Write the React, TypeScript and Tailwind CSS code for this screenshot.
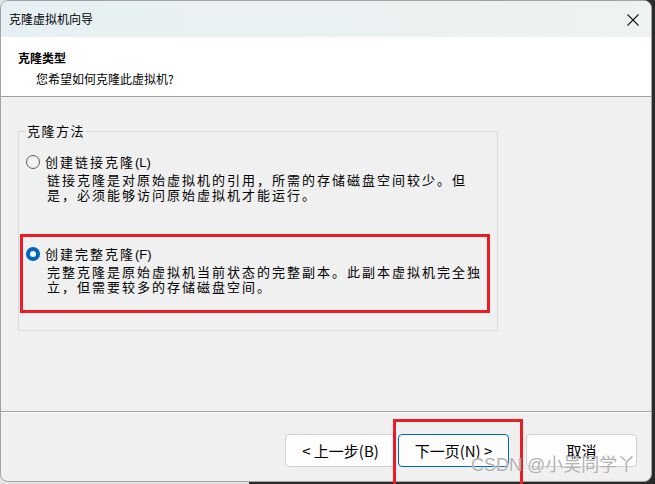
import React from "react";

const cjk = "font-['Noto_Sans_CJK_SC',sans-serif]";

function Radio({ checked }: { checked?: boolean }) {
  if (checked) {
    return (
      <span className="w-[14px] h-[14px] rounded-full bg-[#0067c0] flex items-center justify-center shrink-0">
        <span className="w-[6px] h-[6px] rounded-full bg-white" />
      </span>
    );
  }
  return <span className="w-[14px] h-[14px] rounded-full border border-[#5c5c5c] bg-[#f3f3f3] shrink-0" />;
}

function Option({ checked, label, hotkey, lines }: { checked?: boolean; label: string; hotkey: string; lines: string[] }) {
  return (
    <div className="flex flex-col">
      <div className="flex items-center h-[16px] leading-[16px]">
        <Radio checked={checked} />
        <span className="ml-[5px] text-[13px] tracking-[2px] whitespace-nowrap">
          {label}
          <span className="font-['Liberation_Sans',sans-serif] tracking-normal text-[13px]">{hotkey}</span>
        </span>
      </div>
      <div className="mt-[2px] ml-[21px] text-[13px] leading-[15px] tracking-[2px] whitespace-nowrap">
        {lines.map((l) => (
          <div key={l}>{l}</div>
        ))}
      </div>
    </div>
  );
}

export default function App() {
  return (
    <div className={`relative w-[655px] h-[484px] overflow-hidden bg-[linear-gradient(to_right,#e4e4e4_38%,#2b2b2b_38%)] text-black ${cjk}`}>
      <div className="w-[652px] h-[482px] flex flex-col border border-[#a3a3a3] rounded-[8px] overflow-hidden bg-[#f0f0f0]">
        {/* title bar */}
        <div className="h-[36px] shrink-0 flex items-center justify-between pl-[8px] pr-[12px] bg-[linear-gradient(to_right,#e6f0f4,#eef2f0)]">
          <span className="text-[12px] leading-[16px]">克隆虚拟机向导</span>
          <svg width="12" height="12" viewBox="0 0 12 12" className="mt-[1px]">
            <path d="M0.5 0.5 L11.5 11.5 M11.5 0.5 L0.5 11.5" stroke="#1a1a1a" strokeWidth="1.1" />
          </svg>
        </div>
        {/* header */}
        <div className="h-[59px] shrink-0 bg-white pl-[17px] pt-[13px]">
          <div className="text-[12px] leading-[16px] font-bold">克隆类型</div>
          <div className="mt-[5px] ml-[18px] text-[12px] leading-[16px]">您希望如何克隆此虚拟机?</div>
        </div>
        <div className="h-[1px] shrink-0 bg-[#a0a0a0]" />
        {/* body */}
        <div className="h-[314px] shrink-0 pt-[34px] pl-[17px]">
          <div className="relative w-[480px] h-[200px] border border-[#dadada] pt-[22px] pl-[7px]">
            <span className="absolute -top-[9px] left-[7px] px-[1px] bg-[#f0f0f0] text-[13px] leading-[16px] tracking-[1.5px]">
              克隆方法
            </span>
            <Option
              label="创建链接克隆"
              hotkey="(L)"
              lines={["链接克隆是对原始虚拟机的引用，所需的存储磁盘空间较少。但", "是，必须能够访问原始虚拟机才能运行。"]}
            />
            <div className="-ml-[6px] mt-[32px] w-[470px] h-[79px] border-[3px] border-[#ed1c24] pt-[9px] pl-[3px]">
              <Option
                checked
                label="创建完整克隆"
                hotkey="(F)"
                lines={["完整克隆是原始虚拟机当前状态的完整副本。此副本虚拟机完全独", "立，但需要较多的存储磁盘空间。"]}
              />
            </div>
          </div>
        </div>
        <div className="h-[1px] shrink-0 bg-[#a0a0a0]" />
        <div className="h-[1px] shrink-0 bg-white" />
        {/* footer */}
        <div className="flex-1 flex justify-end items-start pt-[21px] pr-[14px]">
          <button className="w-[111px] h-[33px] rounded-[4px] border border-[#d0d0d0] bg-[#fdfdfd] text-[15px] leading-[20px]">
            &lt; 上一步(B)
          </button>
          <button className="ml-[2px] w-[111px] h-[33px] rounded-[4px] border border-[#0067c0] bg-[#fdfdfd] text-[15px] leading-[20px]">
            下一页(N) &gt;
          </button>
          <button className="ml-[17px] w-[111px] h-[33px] rounded-[4px] border border-[#d0d0d0] bg-[#fdfdfd] text-[15px] leading-[20px]">
            取消
          </button>
        </div>
      </div>
      {/* annotation around next */}
      <div className="absolute left-[393px] top-[419px] w-[130px] h-[68px] border-[3px] border-[#ed1c24] pointer-events-none" />
      {/* watermark */}
      <div className="absolute left-[471px] top-[451px] text-[18px] leading-[24px] text-[#a8a8a8]/90 whitespace-nowrap [text-shadow:0_0_1px_#ffffff] pointer-events-none">
        <span className="font-['Liberation_Sans',sans-serif]">CSDN @</span>小吴同学丫
      </div>
    </div>
  );
}
